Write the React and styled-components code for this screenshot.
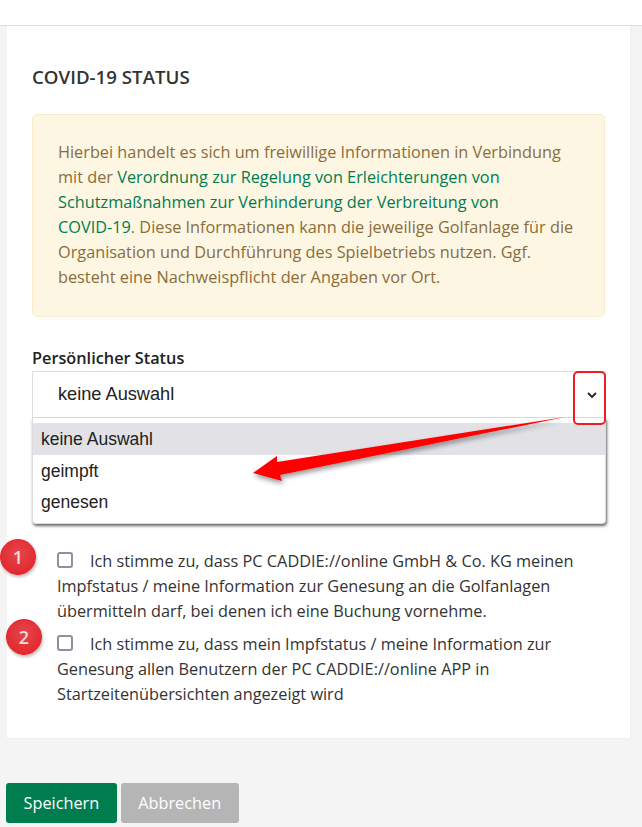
import styled, { createGlobalStyle } from "styled-components";

const GlobalStyle = createGlobalStyle`
    html, body {
        margin: 0;
        height: 827px;
        overflow: hidden;
        background-color: #f4f4f4;
        font-family: "Open Sans", "Liberation Sans", sans-serif;
        font-size: 16.3px;
        color: #333333;
    }
`;

export default function App() {
    return (
        <Page>
            <GlobalStyle />
            <TopBar />
            <Card>
                <Title>COVID-19 STATUS</Title>
                <Notice>
                    Hierbei handelt es sich um freiwillige Informationen in Verbindung
                    mit der <NoticeLink>Verordnung zur Regelung von Erleichterungen von
                    Schutzmaßnahmen zur Verhinderung der Verbreitung von <NoBreak>COVID-19</NoBreak></NoticeLink>. Diese Informationen kann die jeweilige Golfanlage für die
                    Organisation und Durchführung des Spielbetriebs nutzen. Ggf.
                    besteht eine Nachweispflicht der Angaben vor Ort.
                </Notice>

                <FieldLabel>Persönlicher Status</FieldLabel>
                <SelectWrap>
                    <SelectBox>
                        keine Auswahl
                        <svg width="12" height="12" viewBox="0 0 12 12" fill="none">
                            <path d="M2 4l4 4 4-4" stroke="#222" strokeWidth="1.8" />
                        </svg>
                    </SelectBox>
                    <OptionList>
                        <Option $active>keine Auswahl</Option>
                        <Option>geimpft</Option>
                        <Option>genesen</Option>
                    </OptionList>
                    <RedFrame />
                </SelectWrap>

                <Consent>
                    <Tick />
                    Ich stimme zu, dass PC CADDIE://online GmbH &amp; Co. KG meinen
                    Impfstatus / meine Information zur Genesung an die Golfanlagen
                    übermitteln darf, bei denen ich eine Buchung vornehme.
                    <Badge $left={-57} $top={-10}>1</Badge>
                </Consent>
                <Consent>
                    <Tick />
                    Ich stimme zu, dass mein Impfstatus / meine Information zur
                    Genesung allen Benutzern der PC CADDIE://online APP in
                    Startzeitenübersichten angezeigt wird
                    <Badge $left={-51} $top={-13}>2</Badge>
                </Consent>
            </Card>
            <Buttons>
                <Button $bg="#007d4e">Speichern</Button>
                <Button $bg="#b5b5b5">Abbrechen</Button>
            </Buttons>
            <Arrow viewBox="0 0 642 827" width="642" height="827">
                <defs>
                    <filter id="arrowShadow" x="-10%" y="-30%" width="120%" height="170%">
                        <feDropShadow dx="1" dy="3" stdDeviation="2.5" floodColor="#000" floodOpacity="0.4" />
                    </filter>
                </defs>
                <path
                    d="M565 417 L277 462 L277 456 L253 473 L282 481 L280 475 Z"
                    fill="#ff0000"
                    filter="url(#arrowShadow)"
                />
            </Arrow>
        </Page>
    );
}

const Page = styled.div`
    position: relative;
    width: 642px;
    height: 827px;
    overflow: hidden;
`;

const TopBar = styled.div`
    height: 25px;
    background-color: #ffffff;
    border-bottom: 1px solid #dddddd;
`;

const Card = styled.div`
    margin: 0 11px 0 7px;
    height: 713px;
    box-sizing: border-box;
    padding: 39px 24px 0 25px;
    background-color: #ffffff;
    border: 1px solid #eeeeee;
    border-top: 0;
    border-left: 0;
`;

const Title = styled.h2`
    margin: 0 0 25px;
    font-size: 18.7px;
    line-height: 24px;
    font-weight: 600;
    color: #333333;
`;

const Notice = styled.div`
    box-sizing: border-box;
    height: 203px;
    margin-right: 1px;
    padding: 25px 25px;
    background-color: #fdf6e3;
    border: 1px solid #faebcc;
    border-radius: 5px;
    line-height: 25px;
    color: #8a6d3b;
`;

const NoticeLink = styled.span`
    color: #007d4e;
`;

const NoBreak = styled.span`
    white-space: nowrap;
`;

const FieldLabel = styled.div`
    margin-top: 29px;
    font-weight: 600;
    line-height: 25px;
    color: #222222;
`;

const SelectWrap = styled.div`
    position: relative;
    margin-bottom: 131px;
`;

const SelectBox = styled.div`
    display: flex;
    justify-content: space-between;
    align-items: center;
    box-sizing: border-box;
    height: 47px;
    padding: 0 7px 0 25px;
    border: 1px solid #dddddd;
    font-family: "Liberation Sans", Arial, sans-serif;
    font-size: 18.2px;
    color: #222222;
`;

const OptionList = styled.div`
    position: absolute;
    top: 47px;
    left: 0;
    right: 0;
    box-sizing: border-box;
    height: 106px;
    padding-top: 5px;
    background-color: #ffffff;
    border-radius: 0 0 4px 4px;
    border: 1px solid #dddddd;
    border-top: 0;
    box-shadow: 1px 2px 3px rgba(0, 0, 0, 0.6);
    font-family: "Liberation Sans", Arial, sans-serif;
    font-size: 17.5px;
    color: #222222;
`;

const Option = styled.div`
    height: 32px;
    line-height: 32px;
    padding-left: 8px;
    background-color: ${props => (props.$active ? "#e1e1e6" : "transparent")};
    & + & {
        height: 31px;
        line-height: 33px;
    }
`;

const RedFrame = styled.div`
    position: absolute;
    top: 0;
    right: 0;
    width: 33px;
    height: 54px;
    box-sizing: border-box;
    border: 2px solid #ee1c25;
    border-radius: 5px;
`;

const Consent = styled.div`
    position: relative;
    margin-left: 25px;
    margin-bottom: 8px;
    line-height: 25px;
    color: #333333;
`;

const Tick = styled.span`
    display: inline-block;
    width: 16px;
    height: 16px;
    box-sizing: border-box;
    margin-right: 17px;
    vertical-align: -1px;
    background-color: #ffffff;
    border: 2px solid #8f8f9d;
    border-radius: 3px;
`;

const Badge = styled.div`
    position: absolute;
    left: ${props => props.$left}px;
    top: ${props => props.$top}px;
    width: 36px;
    height: 36px;
    box-sizing: border-box;
    border: 1px solid #f01c24;
    border-radius: 50%;
    background: radial-gradient(circle at 50% 40%, #e4474c, #e01f27);
    box-shadow: 1px 2px 3px rgba(0, 0, 0, 0.25);
    color: #f6dcdc;
    font-size: 18px;
    font-weight: 600;
    line-height: 34px;
    text-align: center;
`;

const Buttons = styled.div`
    display: flex;
    gap: 4px;
    margin: 44px 0 0 6px;
`;

const Button = styled.button`
    height: 40px;
    padding: 0 17.5px;
    background-color: ${props => props.$bg};
    border: 0;
    border-radius: 3px;
    font-family: "Open Sans", sans-serif;
    font-size: 16.3px;
    color: #ffffff;
`;

const Arrow = styled.svg`
    position: absolute;
    top: 0;
    left: 0;
    pointer-events: none;
`;
